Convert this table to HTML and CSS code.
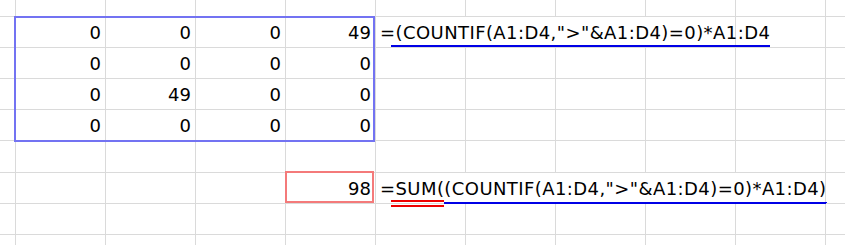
FILE: index.html
```html
<!DOCTYPE html>
<html>
<head>
<meta charset="utf-8">
<link rel="stylesheet" href="styles.css">
</head>
<body>
<div class="sheet">
  <!-- row 0 -->
  <div class="c"></div><div class="c"></div><div class="c"></div><div class="c"></div><div class="c"></div><div class="c"></div><div class="c"></div><div class="c"></div><div class="c"></div><div class="c"></div><div class="c last"></div>

  <!-- selected range A1:D4 -->
  <div class="range">
    <div class="c num">0</div><div class="c num">0</div><div class="c num">0</div><div class="c num">49</div>
    <div class="c num">0</div><div class="c num">0</div><div class="c num">0</div><div class="c num">0</div>
    <div class="c num">0</div><div class="c num">49</div><div class="c num">0</div><div class="c num">0</div>
    <div class="c num">0</div><div class="c num">0</div><div class="c num">0</div><div class="c num">0</div>
  </div>

  <!-- row 1 -->
  <div class="c"></div>
  <div class="c txt span4">=<span class="ul-blue">(COUNTIF(A1:D4,"&gt;"&amp;A1:D4)=0)*A1:D4</span></div>
  <div class="c"></div><div class="c last"></div>
  <!-- row 2 -->
  <div class="c"></div>
  <div class="c"></div><div class="c"></div><div class="c"></div><div class="c"></div><div class="c"></div><div class="c last"></div>
  <!-- row 3 -->
  <div class="c"></div>
  <div class="c"></div><div class="c"></div><div class="c"></div><div class="c"></div><div class="c"></div><div class="c last"></div>
  <!-- row 4 -->
  <div class="c"></div>
  <div class="c"></div><div class="c"></div><div class="c"></div><div class="c"></div><div class="c"></div><div class="c last"></div>
  <!-- row 5 -->
  <div class="c"></div><div class="c"></div><div class="c"></div><div class="c"></div><div class="c"></div><div class="c"></div><div class="c"></div><div class="c"></div><div class="c"></div><div class="c"></div><div class="c last"></div>
  <!-- row 6 -->
  <div class="c"></div><div class="c"></div><div class="c"></div><div class="c"></div>
  <div class="c num result">98</div>
  <div class="c txt span5">=<span class="ul-red">SUM(</span><span class="ul-blue2">(COUNTIF(A1:D4,"&gt;"&amp;A1:D4)=0)*A1:D4)</span></div>
  <div class="c last"></div>
  <!-- row 7 -->
  <div class="c"></div><div class="c"></div><div class="c"></div><div class="c"></div><div class="c"></div><div class="c"></div><div class="c"></div><div class="c"></div><div class="c"></div><div class="c"></div><div class="c last"></div>
  <!-- row 8 -->
  <div class="c"></div><div class="c"></div><div class="c"></div><div class="c"></div><div class="c"></div><div class="c"></div><div class="c"></div><div class="c"></div><div class="c"></div><div class="c"></div><div class="c last"></div>
</div>
</body>
</html>
```

FILE: styles.css
```css
html, body {
  margin: 0;
  padding: 0;
  background: #ffffff;
}

body {
  width: 845px;
  height: 245px;
  overflow: hidden;
  font-family: "DejaVu Sans", Verdana, sans-serif;
  font-size: 18px;
  color: #000000;
}

.sheet {
  display: grid;
  grid-template-columns: 16px repeat(9, 90px) 1fr;
  grid-template-rows: 17px 31px 31px 31px 31px 32px 31px 31px 20px;
  width: 845px;
  height: 245px;
}

.c {
  box-sizing: border-box;
  border-right: 1px solid #dadada;
  border-bottom: 1px solid #dadada;
  line-height: 30px;
  white-space: nowrap;
  min-width: 0;
}

.c.last {
  border-right: none;
}

.range {
  grid-column: 2 / span 4;
  grid-row: 2 / span 4;
  display: grid;
  grid-template-columns: repeat(4, 90px);
  grid-template-rows: repeat(4, 31px);
  position: relative;
}

.range::after {
  content: "";
  position: absolute;
  left: -2px;
  top: -1px;
  right: 1px;
  bottom: -1px;
  border: 2px solid #7373f2;
  pointer-events: none;
}

.num {
  text-align: right;
  padding-right: 4px;
  padding-top: 1px;
}

.txt {
  padding-left: 4px;
  padding-top: 1px;
  background: #ffffff;
  letter-spacing: 0.42px;
}

.span4 {
  grid-column: span 4;
}

.span5 {
  grid-column: span 5;
}

.result {
  position: relative;
}

.result::after {
  content: "";
  position: absolute;
  left: -1px;
  top: -2px;
  width: 89px;
  height: 32px;
  box-sizing: border-box;
  border: 2px solid #f47a7a;
}

.ul-blue {
  border-bottom: 2px solid #0000e6;
  padding-bottom: 2px;
  margin-left: -5px;
  padding-left: 5px;
}

.ul-red {
  border-bottom: 7px double #ee0000;
  padding-bottom: 1px;
  margin-left: -5px;
  padding-left: 5px;
}

.ul-blue2 {
  border-bottom: 2px solid #0000e6;
  padding-bottom: 3px;
}
```
